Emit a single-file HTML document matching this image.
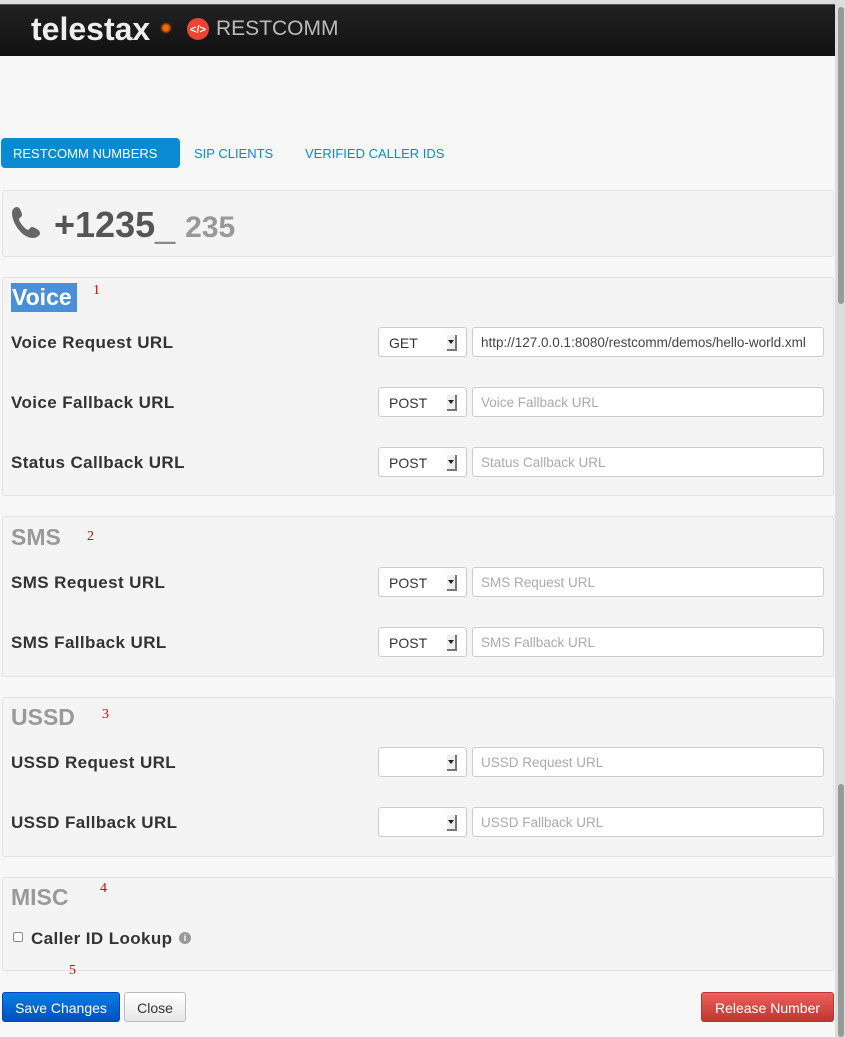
<!DOCTYPE html>
<html><head><style>
*{box-sizing:border-box;margin:0;padding:0}
body{width:845px;height:1037px;overflow:hidden;position:relative;background:#f7f7f7;font-family:"Liberation Sans",sans-serif}
.a{position:absolute}
.hdr{left:0;top:4px;width:835px;height:52px;background:linear-gradient(#222,#111);border-top:1px solid #555}
.panel{position:absolute;left:2px;width:832px;background:#f4f4f4;border:1px solid #e2e2e2;border-radius:3px}
.lbl{position:absolute;left:11px;font-weight:bold;font-size:17px;color:#333;letter-spacing:.4px}
.sel{position:absolute;left:378px;width:89px;height:30px;background:#fff;border:1px solid #ccc;border-radius:3px;font-size:14px;color:#333;padding:7px 0 0 10px}
.sel:after{content:"";position:absolute;right:9px;top:7px;width:8px;height:14px;border-right:2px solid #777;border-bottom:2px solid #777;background:#eee}
.sel i{position:absolute;right:12px;top:12px;border-left:3px solid transparent;border-right:3px solid transparent;border-top:4px solid #222;z-index:2}
.inp{position:absolute;left:472px;width:352px;height:30px;background:#fff;border:1px solid #ccc;border-radius:3px;font-size:13.5px;color:#aaa;padding:7px 0 0 8px;white-space:nowrap;overflow:hidden}
.h{position:absolute;left:11px;font-weight:bold;font-size:23px;color:#999}
.n{position:absolute;color:#d00;font-size:14px;font-family:"Liberation Serif",serif}
.btn{position:absolute;top:992px;height:30px;border-radius:3px;font-size:14px;text-align:center;padding-top:7px}
</style></head><body>
<div class="a" style="left:0;top:0;width:845px;height:4px;background:#ddd"></div>
<div class="a hdr"></div>
<div class="a" style="left:31px;top:11px;font-size:32px;font-weight:bold;color:#eee;letter-spacing:0px">telestax</div>
<div class="a" style="left:160px;top:22px;width:12px;height:12px;background:radial-gradient(#f60 30%,transparent 70%)"></div>
<svg class="a" style="left:186px;top:17px" width="24" height="24"><circle cx="12" cy="12" r="11" fill="#e43"/><text x="12" y="16" font-size="11" fill="#fff" text-anchor="middle" font-family="Liberation Sans" font-weight="bold">&lt;/&gt;</text></svg>
<div class="a" style="left:216px;top:17px;font-size:21px;color:#bbb">RESTCOMM</div>
<div class="a" style="left:835px;top:4px;width:10px;height:1033px;background:#ddd"></div>
<div class="a" style="left:838px;top:7px;width:6px;height:297px;background:#999;border-radius:3px"></div>
<div class="a" style="left:838px;top:784px;width:6px;height:253px;background:#999;border-radius:3px"></div>

<div class="a" style="left:1px;top:138px;width:179px;height:30px;background:#0a8ad0;border-radius:4px;color:#fff;font-size:13px;padding:8px 0 0 12px">RESTCOMM NUMBERS</div>
<div class="a" style="left:194px;top:146px;font-size:13px;color:#0a8ad0">SIP CLIENTS</div>
<div class="a" style="left:305px;top:146px;font-size:13px;color:#0a8ad0">VERIFIED CALLER IDS</div>

<div class="panel" style="top:190px;height:67px"></div>
<svg class="a" style="left:11px;top:205px" width="32" height="34" viewBox="0 0 32 34"><path d="M6 2c3 0 5 6 5 8s-3 3-3 4c0 3 6 10 9 11 1 0 2-3 4-3s8 3 8 6c0 3-4 5-7 5C11 33 1 18 1 8 1 5 3 2 6 2z" fill="#666"/></svg>
<div class="a" style="left:54px;top:204px;font-size:36px;font-weight:bold;color:#555">+1235<span style="font-weight:normal;color:#888">_</span> <span style="font-size:30px;color:#999">235</span></div>

<div class="panel" style="top:277px;height:219px"></div>
<div class="a" style="left:11px;top:283px;width:66px;height:29px;background:#4a90d9"></div>
<div class="a" style="left:12px;top:284px;font-size:23px;font-weight:bold;color:#fff">Voice</div>
<div class="n" style="left:93px;top:283px">1</div>
<div class="lbl" style="top:333px">Voice Request URL</div>
<div class="sel" style="top:327px">GET<i></i></div>
<div class="inp" style="top:327px;color:#444">http://127.0.0.1:8080/restcomm/demos/hello-world.xml</div>
<div class="lbl" style="top:393px">Voice Fallback URL</div>
<div class="sel" style="top:387px">POST<i></i></div>
<div class="inp" style="top:387px">Voice Fallback URL</div>
<div class="lbl" style="top:453px">Status Callback URL</div>
<div class="sel" style="top:447px">POST<i></i></div>
<div class="inp" style="top:447px">Status Callback URL</div>

<div class="panel" style="top:516px;height:161px"></div>
<div class="h" style="top:524px">SMS</div>
<div class="n" style="left:87px;top:529px">2</div>
<div class="lbl" style="top:573px">SMS Request URL</div>
<div class="sel" style="top:567px">POST<i></i></div>
<div class="inp" style="top:567px">SMS Request URL</div>
<div class="lbl" style="top:633px">SMS Fallback URL</div>
<div class="sel" style="top:627px">POST<i></i></div>
<div class="inp" style="top:627px">SMS Fallback URL</div>

<div class="panel" style="top:697px;height:160px"></div>
<div class="h" style="top:704px">USSD</div>
<div class="n" style="left:102px;top:707px">3</div>
<div class="lbl" style="top:753px">USSD Request URL</div>
<div class="sel" style="top:747px"><i></i></div>
<div class="inp" style="top:747px">USSD Request URL</div>
<div class="lbl" style="top:813px">USSD Fallback URL</div>
<div class="sel" style="top:807px"><i></i></div>
<div class="inp" style="top:807px">USSD Fallback URL</div>

<div class="panel" style="top:877px;height:94px"></div>
<div class="h" style="top:884px">MISC</div>
<div class="n" style="left:100px;top:881px">4</div>
<div class="a" style="left:13px;top:932px;width:10px;height:10px;border:1px solid #888;border-radius:2px;background:#fff"></div>
<div class="lbl" style="left:31px;top:929px">Caller ID Lookup</div>
<div class="a" style="left:179px;top:932px;width:12px;height:12px;border-radius:50%;background:#999;color:#fff;font-size:9px;font-weight:bold;text-align:center;line-height:12px">i</div>
<div class="n" style="left:69px;top:963px">5</div>

<div class="btn" style="left:2px;width:118px;background:linear-gradient(#0a7ee0,#0050c0);color:#fff;border:1px solid #04c">Save Changes</div>
<div class="btn" style="left:124px;width:62px;background:linear-gradient(#fff,#e6e6e6);color:#333;border:1px solid #bbb">Close</div>
<div class="btn" style="left:701px;width:133px;background:linear-gradient(#ee5f5b,#bd362f);color:#fff;border:1px solid #b33">Release Number</div>
</body></html>
